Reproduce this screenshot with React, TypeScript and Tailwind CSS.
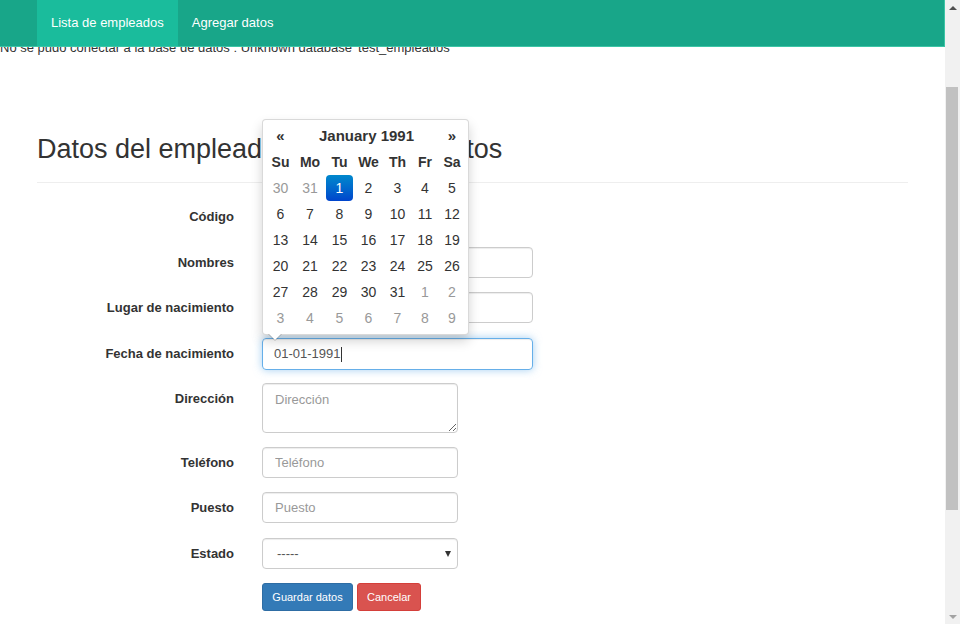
import React from "react";

const weeks: { d: number; muted?: boolean; active?: boolean }[][] = [
  [{ d: 30, muted: true }, { d: 31, muted: true }, { d: 1, active: true }, { d: 2 }, { d: 3 }, { d: 4 }, { d: 5 }],
  [{ d: 6 }, { d: 7 }, { d: 8 }, { d: 9 }, { d: 10 }, { d: 11 }, { d: 12 }],
  [{ d: 13 }, { d: 14 }, { d: 15 }, { d: 16 }, { d: 17 }, { d: 18 }, { d: 19 }],
  [{ d: 20 }, { d: 21 }, { d: 22 }, { d: 23 }, { d: 24 }, { d: 25 }, { d: 26 }],
  [{ d: 27 }, { d: 28 }, { d: 29 }, { d: 30 }, { d: 31 }, { d: 1, muted: true }, { d: 2, muted: true }],
  [{ d: 3, muted: true }, { d: 4, muted: true }, { d: 5, muted: true }, { d: 6, muted: true }, { d: 7, muted: true }, { d: 8, muted: true }, { d: 9, muted: true }],
];

const dayNames = ["Su", "Mo", "Tu", "We", "Th", "Fr", "Sa"];

function Label({ text }: { text: string }) {
  return (
    <div className="w-[197px] h-[31px] flex items-center justify-end font-bold text-[13px] text-[#333] shrink-0">
      {text}
    </div>
  );
}

const inputCls =
  "h-[31px] border border-[#ccc] rounded-[4px] px-[12px] text-[13px] text-[#555] placeholder:text-[#999] outline-none shadow-[inset_0_1px_1px_rgba(0,0,0,0.075)] bg-white";

function DatePicker() {
  return (
    <div className="absolute left-[262px] top-[119px] w-[207px] h-[216px] bg-white border border-[rgba(0,0,0,0.15)] rounded-[4px] shadow-[0_6px_12px_rgba(0,0,0,0.175)] z-20 px-[3px] pt-[4px]">
      <div className="grid grid-cols-[29px_30px_29px_29px_29px_26px_28px] text-[14px]">
        <div className="h-[25px] flex items-center justify-center font-bold text-[15px]">«</div>
        <div className="col-span-5 h-[25px] flex items-center justify-center font-bold text-[15px]">January 1991</div>
        <div className="h-[25px] flex items-center justify-center font-bold text-[15px]">»</div>
        {dayNames.map((n) => (
          <div key={n} className="h-[26px] flex items-center justify-center font-bold">
            {n}
          </div>
        ))}
        {weeks.flat().map((c, i) => (
          <div key={i} className="h-[26px] flex items-center justify-center">
            {c.active ? (
              <span className="w-[27px] h-[26px] flex items-center justify-center rounded-[4px] text-white bg-gradient-to-b from-[#0088cc] to-[#0044cc]">
                {c.d}
              </span>
            ) : (
              <span className={c.muted ? "text-[#999]" : "text-[#333]"}>{c.d}</span>
            )}
          </div>
        ))}
      </div>
      <div className="absolute left-[5px] bottom-[-7px] w-0 h-0 border-l-[7px] border-r-[7px] border-t-[7px] border-l-transparent border-r-transparent border-t-[rgba(0,0,0,0.2)]" />
      <div className="absolute left-[6px] bottom-[-6px] w-0 h-0 border-l-[6px] border-r-[6px] border-t-[6px] border-l-transparent border-r-transparent border-t-white" />
    </div>
  );
}

export default function App() {
  return (
    <div className="flex w-[960px] h-[624px] overflow-hidden bg-white font-['Liberation_Sans',Arial,sans-serif] text-[13px] text-[#333]">
      <div className="relative w-[945px] h-full">
        <nav className="absolute top-0 left-0 w-[945px] h-[47px] bg-[#18a689] border-b border-r border-[#3cc5a6] flex pl-[37px] z-10">
          <a className="h-[46px] px-[14px] flex items-center bg-[#1abc9c] text-white text-[13px]">Lista de empleados</a>
          <a className="h-[46px] px-[14px] flex items-center text-white text-[13px]">Agregar datos</a>
        </nav>

        <div className="pt-[38px] leading-[20px] text-[13px]">
          No se pudo conectar a la base de datos : Unknown database 'test_empleados'
        </div>

        <div className="px-[37px]">
          <h1 className="mt-[75px] text-[27px] leading-[32px] text-[#333]">Datos del empleado — Registrar datos</h1>
          <div className="mt-[17px] border-t border-[#eee]" />

          <div className="mt-[18px] flex gap-[28px]">
            <Label text="Código" />
            <input className={`${inputCls} w-[196px]`} />
          </div>
          <div className="mt-[15px] flex gap-[28px]">
            <Label text="Nombres" />
            <input className={`${inputCls} w-[271px]`} />
          </div>
          <div className="mt-[14px] flex gap-[28px]">
            <Label text="Lugar de nacimiento" />
            <input className={`${inputCls} w-[271px]`} />
          </div>
          <div className="mt-[15px] flex gap-[28px]">
            <Label text="Fecha de nacimiento" />
            <div className="h-[32px] w-[271px] border border-[#66afe9] rounded-[4px] px-[11px] flex items-center text-[13px] text-[#555] shadow-[inset_0_1px_1px_rgba(0,0,0,0.075),0_0_8px_rgba(102,175,233,0.6)]">
              01-01-1991<span className="inline-block w-px h-[15px] bg-[#333]" />
            </div>
          </div>
          <div className="mt-[13px] flex gap-[28px] items-start">
            <Label text="Dirección" />
            <textarea
              placeholder="Dirección"
              className="w-[196px] h-[50px] border border-[#ccc] rounded-[4px] px-[12px] py-[6px] text-[13px] text-[#555] placeholder:text-[#999] outline-none shadow-[inset_0_1px_1px_rgba(0,0,0,0.075)]"
            />
          </div>
          <div className="mt-[14px] flex gap-[28px]">
            <Label text="Teléfono" />
            <input placeholder="Teléfono" className={`${inputCls} w-[196px]`} />
          </div>
          <div className="mt-[14px] flex gap-[28px]">
            <Label text="Puesto" />
            <input placeholder="Puesto" className={`${inputCls} w-[196px]`} />
          </div>
          <div className="mt-[15px] flex gap-[28px]">
            <Label text="Estado" />
            <div className="relative w-[196px] h-[31px] border border-[#ccc] rounded-[4px] bg-white flex items-center pl-[14px] text-[13px] text-[#555] shadow-[inset_0_1px_1px_rgba(0,0,0,0.075)]">
              -----
              <span className="absolute right-[6px] top-[12px] w-0 h-0 border-l-[3px] border-r-[3px] border-t-[6px] border-l-transparent border-r-transparent border-t-[#333]" />
            </div>
          </div>
          <div className="mt-[14px] flex gap-[4px] pl-[225px]">
            <button className="h-[28px] w-[91px] bg-[#337ab7] border border-[#2e6da4] rounded-[3px] text-white text-[11px]">
              Guardar datos
            </button>
            <button className="h-[28px] w-[64px] bg-[#d9534f] border border-[#d43f3a] rounded-[3px] text-white text-[11px]">
              Cancelar
            </button>
          </div>
        </div>

        <DatePicker />
      </div>

      <div className="relative w-[15px] h-full bg-[#f1f1f1] flex flex-col items-center">
        <div className="h-[15px] flex items-center justify-center">
          <span className="w-0 h-0 border-l-[4px] border-r-[4px] border-b-[4px] border-l-transparent border-r-transparent border-b-[#505050]" />
        </div>
        <div className="mt-[72px] ml-[-1px] w-[12px] h-[423px] bg-[#c1c1c1]" />
        <div className="mt-auto h-[15px] flex items-center justify-center">
          <span className="w-0 h-0 border-l-[4px] border-r-[4px] border-t-[4px] border-l-transparent border-r-transparent border-t-[#a3a3a3]" />
        </div>
      </div>
    </div>
  );
}
